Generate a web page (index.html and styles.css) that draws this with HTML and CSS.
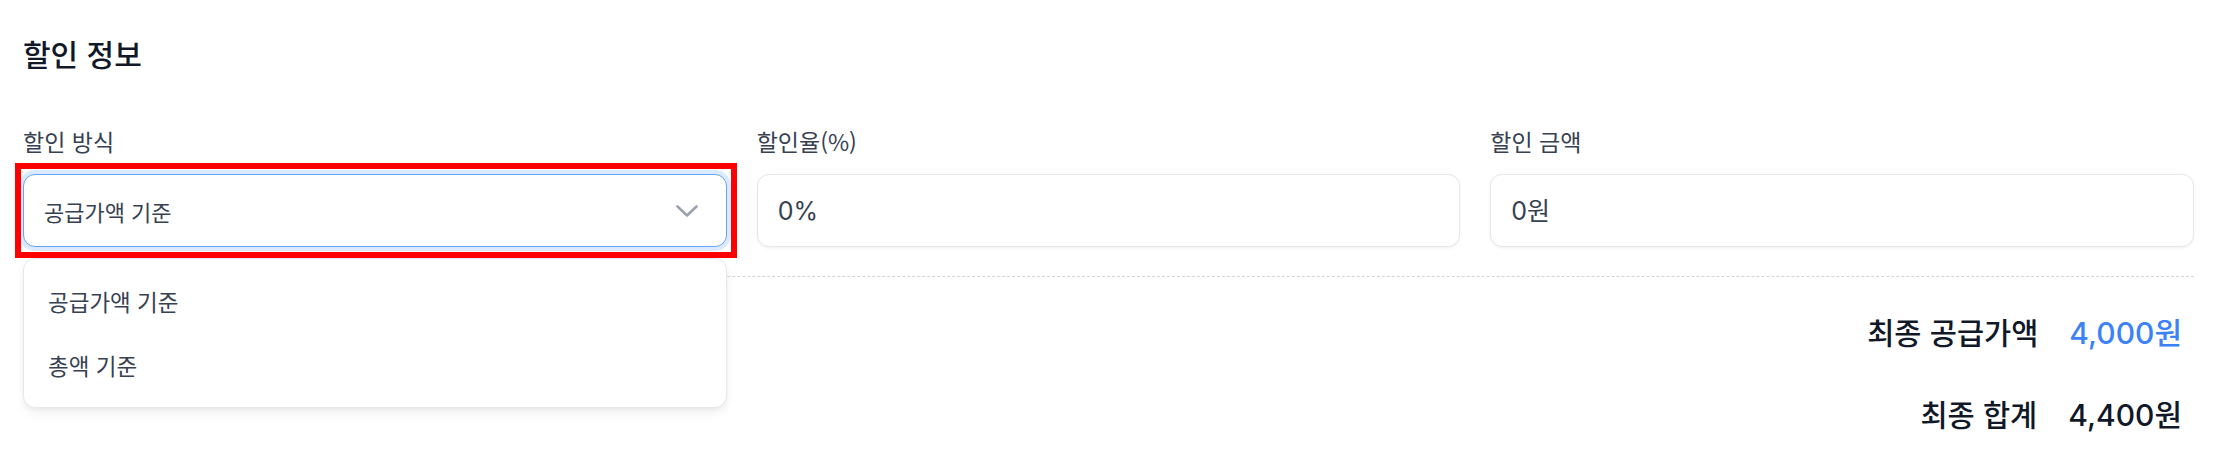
FILE: index.html
```html
<!DOCTYPE html>
<html lang="ko">
<head>
<meta charset="utf-8">
<title>할인 정보</title>
<link rel="stylesheet" href="styles.css">
</head>
<body>
<div class="page">
  <h2 class="title">할인 정보</h2>

  <div class="fields">
    <div class="field">
      <div class="label">할인 방식</div>
      <div class="select-wrap">
        <div class="select is-open">
          <span class="select-text">공급가액 기준</span>
          <svg class="chevron" width="22" height="12" viewBox="0 0 22 12" aria-hidden="true">
            <path d="M1.5 1.5 L11 10.5 L20.5 1.5" fill="none" stroke="#9ca3af" stroke-width="2.6" stroke-linecap="round" stroke-linejoin="round"/>
          </svg>
        </div>
        <div class="highlight"></div>
        <ul class="menu">
          <li class="menu-item">공급가액 기준</li>
          <li class="menu-item">총액 기준</li>
        </ul>
      </div>
    </div>

    <div class="field">
      <div class="label">할인율(%)</div>
      <div class="input"><span class="input-value">0%</span></div>
    </div>

    <div class="field">
      <div class="label">할인 금액</div>
      <div class="input"><span class="input-value">0원</span></div>
    </div>
  </div>

  <div class="divider"></div>

  <div class="summary">
    <div class="summary-row">
      <span class="summary-key">최종 공급가액</span>
      <span class="summary-value is-blue">4,000원</span>
    </div>
    <div class="summary-row">
      <span class="summary-key">최종 합계</span>
      <span class="summary-value">4,400원</span>
    </div>
  </div>
</div>
</body>
</html>
```

FILE: styles.css
```css
* {
  box-sizing: border-box;
}

html, body {
  margin: 0;
  padding: 0;
  background: #ffffff;
}

body {
  font-family: "Noto Sans CJK KR", "Noto Sans", sans-serif;
  color: #374151;
}

.page {
  padding: 33px 23px 0 23px;
}

.title {
  margin: 0;
  font-size: 30px;
  line-height: 40px;
  font-weight: 500;
  color: #111827;
}

.fields {
  margin-top: 53px;
  display: grid;
  grid-template-columns: repeat(3, 1fr);
  column-gap: 30px;
}

.field {
  display: flex;
  flex-direction: column;
}

.label {
  font-size: 23px;
  line-height: 30px;
  color: #374151;
  margin-bottom: 18px;
}

.select-wrap {
  position: relative;
}

.select,
.input {
  height: 73px;
  border-radius: 12px;
  border: 1px solid #e5e7eb;
  background: #ffffff;
  display: flex;
  align-items: center;
  box-shadow: 0 1px 3px rgba(0, 0, 0, 0.06);
}

.select {
  justify-content: space-between;
  padding: 0 28px 0 20px;
}

.select.is-open {
  border-color: #60a5fa;
  box-shadow: 0 0 0 4px #dbeafe;
}

.select-text {
  font-size: 22px;
  line-height: 30px;
  color: #374151;
}

.chevron {
  display: block;
  flex: none;
}

.input {
  padding: 0 20px;
}

.input-value {
  font-family: Inter, "Noto Sans CJK KR", sans-serif;
  font-size: 25px;
  line-height: 30px;
  color: #374151;
}

.highlight {
  position: absolute;
  top: -11px;
  left: -8px;
  width: 722px;
  height: 95px;
  border: 6px solid #ff0000;
  pointer-events: none;
}

.menu {
  position: absolute;
  top: calc(100% + 11px);
  left: 0;
  right: 0;
  margin: 0;
  padding: 10px 0;
  list-style: none;
  background: #ffffff;
  border: 1px solid #e5e7eb;
  border-radius: 12px;
  box-shadow: 0 6px 12px -2px rgba(0, 0, 0, 0.07), 0 2px 4px rgba(0, 0, 0, 0.03);
  z-index: 2;
}

.menu-item {
  height: 64px;
  display: flex;
  align-items: center;
  padding-left: 24px;
  font-size: 22.5px;
  line-height: 30px;
  color: #374151;
}

.divider {
  margin-top: 29px;
  border-top: 1px dashed #d1d5db;
}

.summary {
  padding: 34px 12px 0 0;
  display: flex;
  flex-direction: column;
  align-items: flex-end;
  row-gap: 40px;
}

.summary-row {
  display: flex;
  align-items: baseline;
  column-gap: 31px;
  line-height: 40px;
}

.summary-key {
  font-size: 29.5px;
  font-weight: 500;
  color: #111827;
}

.summary-value {
  font-family: Inter, "Noto Sans CJK KR", sans-serif;
  font-size: 30px;
  font-weight: 500;
  color: #111827;
}

.summary-value.is-blue {
  color: #3b82f6;
}
```
